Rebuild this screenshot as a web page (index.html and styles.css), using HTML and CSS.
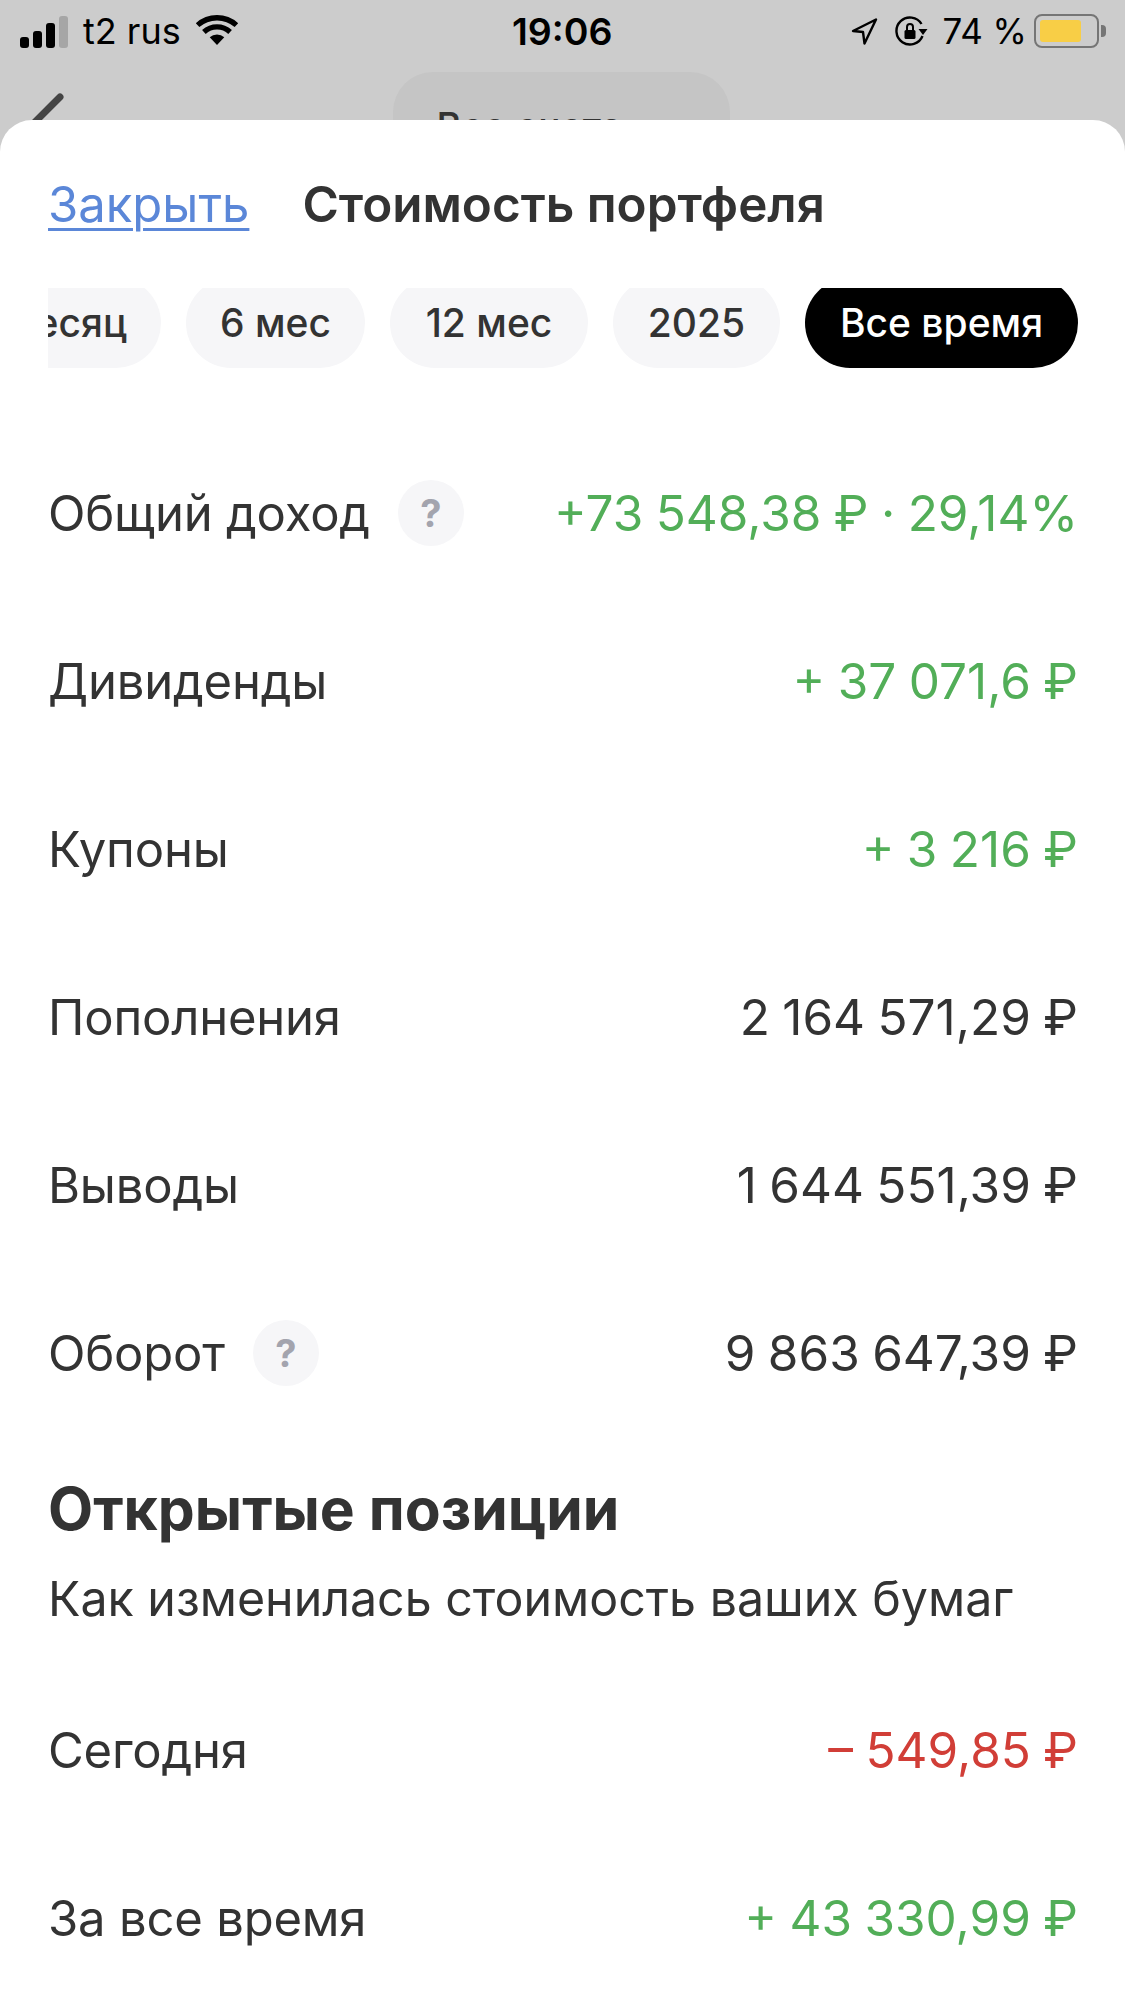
FILE: index.html
```html
<!DOCTYPE html>
<html lang="ru">
<head>
  <meta charset="UTF-8">
  <meta name="viewport" content="width=device-width, initial-scale=1.0">
  <title>Стоимость портфеля</title>
  <link rel="stylesheet" href="styles.css">
</head>
<body>

<div class="page">
  <div class="status-bar">
    <div class="status-left">
      <div class="signal">
        <span class="bar bar-1"></span>
        <span class="bar bar-2"></span>
        <span class="bar bar-3"></span>
        <span class="bar bar-4"></span>
      </div>
      <span class="carrier">t2 rus</span>
      <svg class="wifi" width="46" height="33" viewBox="0 0 46 34">
        <path d="M23 33 L15.500 25 A11 11 0 0 1 30.500 25 Z" fill="#000"/>
        <path d="M9.500 19.500 A20 20 0 0 1 36.500 19.500" fill="none" stroke="#000" stroke-width="5.500"/>
        <path d="M3 12.500 A30 30 0 0 1 43 12.500" fill="none" stroke="#000" stroke-width="5.500"/>
      </svg>
    </div>
    <div class="status-time">19:06</div>
    <div class="status-right">
      <svg class="arrow" width="27" height="27" viewBox="0 0 26 27">
        <path d="M1.500 13 L24.500 1.500 L13 25.500 L11.500 14 Z" fill="none" stroke="#000" stroke-width="2.400" stroke-linejoin="round"/>
      </svg>
      <svg class="lock" width="33" height="30" viewBox="0 0 32 30">
        <path d="M27 20 A13.500 13.500 0 1 1 26 8" fill="none" stroke="#000" stroke-width="2.400"/>
        <path d="M23 13 L32 13 L27.500 19 Z" fill="#000"/>
        <rect x="9" y="14" width="11" height="9" rx="1.500" fill="#000"/>
        <path d="M11.500 14 V11 A3 3 0 0 1 17.500 11 V14" fill="none" stroke="#000" stroke-width="2"/>
      </svg>
      <span class="battery-text">74 %</span>
      <div class="battery">
        <div class="battery-level"></div>
      </div>
      <span class="battery-cap"></span>
    </div>
  </div>

  <div class="nav-behind">
    <svg class="back" width="40" height="40" viewBox="0 0 40 40">
      <path d="M30 5 L4 31" fill="none" stroke="#444" stroke-width="7" stroke-linecap="round"/>
    </svg>
    <div class="account-pill">Все счета</div>
  </div>

  <div class="sheet">
    <div class="sheet-head">
      <a class="close-link" href="#">Закрыть</a>
      <h1 class="sheet-title">Стоимость портфеля</h1>
    </div>

    <div class="chips">
      <span class="chip chip-cut">месяц</span>
      <span class="chip chip-6">6 мес</span>
      <span class="chip chip-12">12 мес</span>
      <span class="chip chip-2025">2025</span>
      <span class="chip chip-active">Все время</span>
    </div>

    <div class="rows">
      <div class="row">
        <div class="row-label">Общий доход <span class="hint">?</span></div>
        <div class="row-value green">+73 548,38 ₽ · 29,14%</div>
      </div>
      <div class="row">
        <div class="row-label">Дивиденды</div>
        <div class="row-value green">+ 37 071,6 ₽</div>
      </div>
      <div class="row">
        <div class="row-label">Купоны</div>
        <div class="row-value green">+ 3 216 ₽</div>
      </div>
      <div class="row">
        <div class="row-label">Пополнения</div>
        <div class="row-value">2 164 571,29 ₽</div>
      </div>
      <div class="row">
        <div class="row-label">Выводы</div>
        <div class="row-value">1 644 551,39 ₽</div>
      </div>
      <div class="row">
        <div class="row-label">Оборот <span class="hint">?</span></div>
        <div class="row-value">9 863 647,39 ₽</div>
      </div>
    </div>

    <h2 class="section-title">Открытые позиции</h2>
    <p class="section-sub">Как изменилась стоимость ваших бумаг</p>

    <div class="rows rows-open">
      <div class="row">
        <div class="row-label">Сегодня</div>
        <div class="row-value red">– 549,85 ₽</div>
      </div>
      <div class="row">
        <div class="row-label">За все время</div>
        <div class="row-value green">+ 43 330,99 ₽</div>
      </div>
    </div>
  </div>
</div>

</body>
</html>
```

FILE: styles.css
```css
body {
  font-family: Inter, "Noto Sans", sans-serif;
  margin: 0;
  padding: 0;
  background-color: #fff;
}

.page {
  width: 1125px;
  height: 2001px;
  overflow: hidden;
  background-color: #ccc;
}

/* status bar */
.status-bar {
  height: 62px;
  position: relative;
  display: flex;
  justify-content: space-between;
  align-items: center;
  color: #000;
}

.status-left {
  display: flex;
  align-items: center;
  padding-left: 20px;
}

.signal {
  display: flex;
  align-items: flex-end;
  gap: 4px;
  height: 32px;
  margin-top: 2px;
}

.bar {
  width: 9px;
  background-color: #000;
  border-radius: 3px;
}

.bar-1 { height: 11px; }
.bar-2 { height: 17px; }
.bar-3 { height: 25px; }
.bar-4 { height: 32px; background-color: #a6a6a6; }

.carrier {
  font-size: 36px;
  margin-left: 15px;
}

.wifi {
  margin-left: 13px;
  margin-top: -3px;
}

.status-time {
  position: absolute;
  left: 512px;
  top: 9px;
  font-size: 37.500px;
  font-weight: 600;
}

.status-right {
  display: flex;
  align-items: center;
  padding-right: 19px;
}

.arrow {
  margin-right: 17px;
}

.lock {
  margin-right: 14px;
}

.battery-text {
  font-size: 35px;
  margin-right: 7px;
}

.battery {
  width: 65px;
  height: 34px;
  border: 2px solid #757575;
  border-radius: 8px;
  padding: 4px;
  box-sizing: border-box;
}

.battery-level {
  width: 41px;
  height: 22px;
  background-color: #f8ce46;
  border-radius: 3px;
}

.battery-cap {
  width: 5px;
  height: 12px;
  margin-left: 2px;
  background-color: #757575;
  border-radius: 0 4px 4px 0;
}

/* what is left of the screen behind the sheet */
.nav-behind {
  height: 58px;
  position: relative;
  overflow: hidden;
}

.back {
  position: absolute;
  left: 30px;
  top: 30px;
}

.account-pill {
  position: absolute;
  left: 393px;
  top: 10px;
  width: 337px;
  height: 130px;
  padding-right: 64px;
  box-sizing: border-box;
  border-radius: 40px;
  background-color: #c5c5c5;
  color: #333;
  font-size: 38px;
  font-weight: 500;
  text-align: center;
  line-height: 108px;
}

/* sheet */
.sheet {
  background-color: #fff;
  border-radius: 32px 32px 0 0;
  height: 1881px;
  padding: 0 47px 0 48px;
  box-sizing: border-box;
}

.sheet-head {
  display: flex;
  align-items: center;
  gap: 53px;
  height: 168px;
}

.close-link {
  font-size: 49px;
  color: #5b87d8;
  text-decoration: underline;
  text-decoration-thickness: 3px;
  text-underline-offset: 6px;
}

.sheet-title {
  margin: 0;
  font-size: 49.400px;
  font-weight: 600;
  color: #333;
}

.chips {
  display: flex;
  justify-content: flex-end;
  gap: 25px;
  height: 80px;
  overflow: hidden;
}

.chip {
  height: 90px;
  margin-top: -10px;
  box-sizing: border-box;
  border-radius: 45px;
  background-color: #f6f6f8;
  color: #333;
  font-size: 39px;
  font-weight: 500;
  line-height: 90px;
  text-align: center;
  flex: none;
}

.chip-cut {
  width: 113px;
  border-radius: 0 45px 45px 0;
  overflow: hidden;
  padding-right: 34px;
  white-space: nowrap;
  direction: rtl;
}

.chip-6 { width: 179px; }
.chip-12 { width: 198px; }
.chip-2025 { width: 167px; }

.chip-active {
  width: 273px;
  background-color: #000;
  color: #fff;
}

.rows {
  margin-top: 61px;
}

.row {
  height: 168px;
  display: flex;
  justify-content: space-between;
  align-items: center;
  font-size: 49px;
  color: #333;
}

.row-label {
  display: flex;
  align-items: center;
  letter-spacing: -0.200px;
}

.row-value {
  font-size: 49.500px;
  word-spacing: -1.500px;
}

.hint {
  width: 66px;
  height: 66px;
  margin-left: 28px;
  border-radius: 50%;
  background-color: #f6f6f8;
  color: #a3a4ae;
  font-size: 38px;
  font-weight: 700;
  text-align: center;
  line-height: 66px;
}

.green { color: #52ae58; }
.red { color: #d13e37; }

.section-title {
  margin: 37px 0 0;
  font-size: 58.700px;
  font-weight: 700;
  color: #333;
  line-height: 70px;
}

.section-sub {
  margin: 27px 0 0;
  font-size: 48.300px;
  color: #333;
  line-height: 56px;
}

.rows-open {
  margin-top: 39px;
}
```
